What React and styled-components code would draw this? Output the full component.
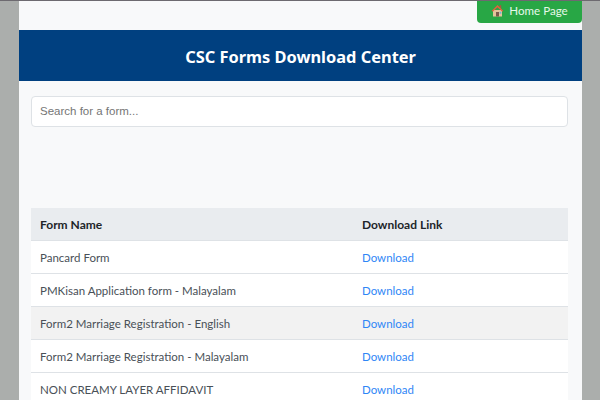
import React from "react";
import styled, { createGlobalStyle } from "styled-components";

const Global = createGlobalStyle`
  html, body { margin: 0; padding: 0; height: 100%; overflow: hidden; background: #abaeac; }
  #root { height: 100%; }
  * { box-sizing: border-box; }
`;
const Page = styled.div`
  height: 400px;
  overflow: hidden;
  border-top: 1px solid #6d6a70;
  padding: 0 18px 0 19px;
  font-family: "Lato", "Noto Sans", sans-serif;
`;
const Shell = styled.main`
  background: #f8f9fa;
  height: 100%;
  display: flex;
  flex-direction: column;
`;
const TopBar = styled.div`
  flex: none;
  height: 29px;
  display: flex;
  justify-content: flex-end;
  align-items: flex-start;
`;
const HomeLink = styled.a`
  width: 105px;
  height: 22px;
  background: #28a745;
  color: #e6f8ea;
  border-radius: 0 0 4px 4px;
  display: flex;
  align-items: center;
  justify-content: center;
  gap: 5px;
  font-size: 11.6px;
  padding-bottom: 4px;
`;
const Header = styled.header`
  flex: none;
  height: 51px;
  padding-top: 1px;
  background: #004080;
  color: #fff;
  display: flex;
  align-items: center;
  justify-content: center;
  font-family: "Noto Sans", sans-serif;
  font-size: 16.4px;
  font-weight: 700;
`;
const Content = styled.section`
  flex: none;
  padding: 15px 14px 0 12px;
`;
const Search = styled.input`
  display: block;
  width: 100%;
  height: 31px;
  border: 1px solid #dee2e6;
  border-radius: 4px;
  background: #fff;
  padding: 0 8px 2px;
  font: 11.5px "Liberation Sans", Arial, sans-serif;
  &::placeholder { color: #757575; opacity: 1; }
`;
const Spacer = styled.div`
  height: 81px;
`;
const Table = styled.table`
  width: 100%;
  border-collapse: collapse;
  table-layout: fixed;
  font-size: 11.5px;
  color: #495057;
`;
const Row = styled.tr`
  height: 33px;
  background: ${(p) => (p.$shaded ? "#f2f2f2" : "#fff")};
  border-bottom: 1px solid #dee2e6;
`;
const HeadRow = styled(Row)`
  height: 32px;
  background: #e9ecef;
`;
const Th = styled.th`
  text-align: left;
  padding: 1px 9px 0;
  font-size: 12px;
  color: #212529;
  font-weight: 700;
  &:first-child { width: 322px; }
`;
const Td = styled.td`
  padding: 1px 9px 0;
`;
const Link = styled.a`
  color: #2f86f6;
`;

const rows = [
  "Pancard Form",
  "PMKisan Application form - Malayalam",
  "Form2 Marriage Registration - English",
  "Form2 Marriage Registration - Malayalam",
  "NON CREAMY LAYER AFFIDAVIT",
];

const HouseIcon = () => (
  <svg width="13" height="13" viewBox="0 0 13 13" aria-hidden="true">
    <rect x="2" y="6" width="9" height="6.5" fill="#e3c39b" />
    <rect x="8.6" y="1.2" width="1.6" height="3.5" fill="#a9573f" />
    <path d="M6.5 1 L0.5 7 L2 7.6 L6.5 3.3 L11 7.6 L12.5 7 Z" fill="#e0603f" />
    <rect x="5" y="8" width="3" height="4.5" fill="#7a5a4a" />
    <rect x="8.6" y="7.8" width="1.7" height="1.9" fill="#6db4d8" />
  </svg>
);

export default function App() {
  return (
    <>
      <Global />
      <Page>
        <Shell>
          <TopBar>
            <HomeLink>
              <HouseIcon />
              Home Page
            </HomeLink>
          </TopBar>
          <Header>CSC Forms Download Center</Header>
          <Content>
            <Search placeholder="Search for a form..." />
            <Spacer />
            <Table>
              <thead>
                <HeadRow>
                  <Th>Form Name</Th>
                  <Th>Download Link</Th>
                </HeadRow>
              </thead>
              <tbody>
                {rows.map((name, i) => (
                  <Row key={name} $shaded={i === 2}>
                    <Td>{name}</Td>
                    <Td>
                      <Link>Download</Link>
                    </Td>
                  </Row>
                ))}
              </tbody>
            </Table>
          </Content>
        </Shell>
      </Page>
    </>
  );
}
